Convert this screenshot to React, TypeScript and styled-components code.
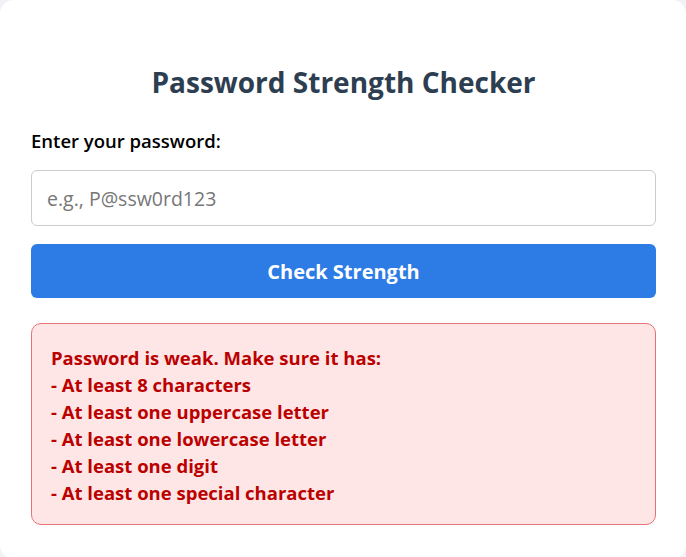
import styled, { createGlobalStyle } from 'styled-components';

const GlobalStyle = createGlobalStyle`
  body {
    margin: 0;
    background-color: #f0f2f5;
    font-family: 'Open Sans', 'Noto Sans', sans-serif;
  }
`;

const Card = styled.div`
  background-color: #ffffff;
  border-radius: 14px;
  padding: 64px 30px 34px 31px;
  min-height: 557px;
  box-sizing: border-box;
`;

const Title = styled.h1`
  margin: 0 0 29px;
  text-align: center;
  font-size: 28px;
  line-height: 36px;
  font-weight: 700;
  color: #2c3e50;
`;

const Label = styled.label`
  display: block;
  font-size: 18.5px;
  line-height: 24px;
  font-weight: 600;
  color: #000000;
  margin-bottom: 17px;
`;

const Input = styled.input`
  display: block;
  width: 100%;
  height: 56px;
  box-sizing: border-box;
  padding: 0 15px;
  border: 1px solid #cccccc;
  border-radius: 6px;
  font-family: inherit;
  font-size: 19.5px;
  color: #333333;

  &::placeholder {
    color: #777777;
  }
`;

const Button = styled.button`
  display: block;
  width: 100%;
  height: 54px;
  margin-top: 18px;
  border: none;
  border-radius: 6px;
  background-color: #2d7be5;
  color: #ffffff;
  font-family: inherit;
  font-size: 20px;
  font-weight: 700;
  cursor: pointer;
`;

const Message = styled.div`
  margin-top: 25px;
  padding: 20px 19px 18px;
  background-color: #ffe6e6;
  border: 1px solid #e57373;
  border-radius: 10px;
  color: #bb0000;
  font-size: 18.5px;
  line-height: 27px;
  font-weight: 700;
`;

const rules = [
  'At least 8 characters',
  'At least one uppercase letter',
  'At least one lowercase letter',
  'At least one digit',
  'At least one special character',
];

function App() {
  return (
    <>
      <GlobalStyle />
      <Card>
        <Title>Password Strength Checker</Title>
        <Label htmlFor="password">Enter your password:</Label>
        <Input id="password" type="password" placeholder="e.g., P@ssw0rd123" />
        <Button type="button">Check Strength</Button>
        <Message>
          <div>Password is weak. Make sure it has:</div>
          {rules.map((rule) => (
            <div key={rule}>- {rule}</div>
          ))}
        </Message>
      </Card>
    </>
  );
}

export default App;
